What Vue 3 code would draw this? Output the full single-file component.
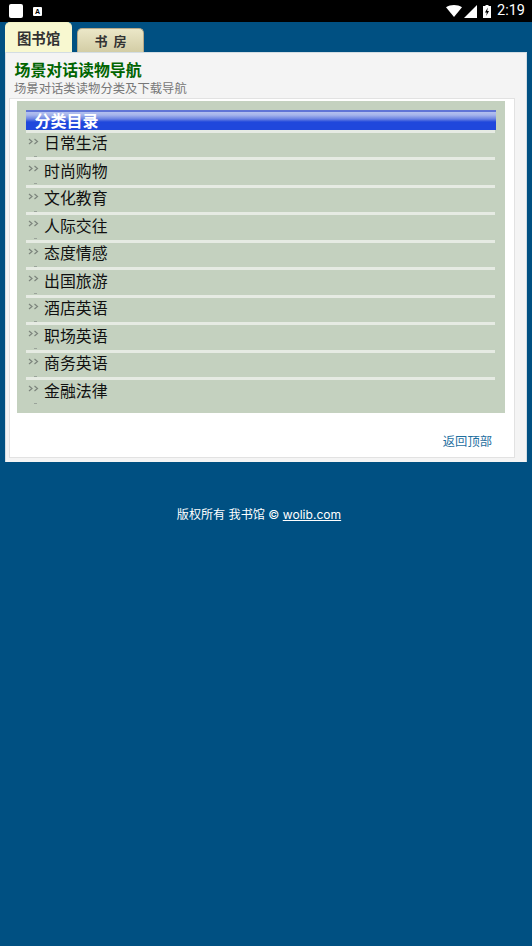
<script setup>
const items = ['日常生活', '时尚购物', '文化教育', '人际交往', '态度情感', '出国旅游', '酒店英语', '职场英语', '商务英语', '金融法律']
</script>

<template>
  <div class="page">
    <header class="status">
      <div class="status-left">
        <span class="app-square"></span>
        <span class="app-a"><span>A</span></span>
      </div>
      <div class="status-right">
        <svg class="wifi" width="16" height="12" viewBox="0 0 16 12"><path d="M0 2.2C4.5-.7 11.500-.7 16 2.200L8 12Z" fill="#fff"/></svg>
        <svg class="signal" width="13" height="13" viewBox="0 0 13 13"><path d="M13 0V13H0Z" fill="#fff"/></svg>
        <svg class="battery" width="8" height="13" viewBox="0 0 8 13"><path d="M2.500 0H5.500V1H8V13H0V1H2.500Z" fill="#fff"/><path d="M4.800 2.500 2 7.500H3.800L3.200 11 6 6H4.200Z" fill="#000"/></svg>
        <span class="time">2:19</span>
      </div>
    </header>

    <nav class="tabs">
      <div class="tab active">图书馆</div>
      <div class="tab idle">书&nbsp;&nbsp;房</div>
    </nav>

    <main class="panel">
      <h1 class="title">场景对话读物导航</h1>
      <p class="subtitle">场景对话类读物分类及下载导航</p>
      <section class="inner">
        <div class="green">
          <h2 class="cat-head">分类目录</h2>
          <div class="head-rule"></div>
          <ul class="list">
            <li v-for="(item, i) in items" :key="item" class="row" :class="{ last: i === items.length - 1 }">
              <svg class="arrows" width="11" height="7" viewBox="0 0 11 7"><path d="M1 1 4 3.500 1 6M6.500 1 9.500 3.500 6.500 6" fill="none" stroke="#7c847c" stroke-width="1.200"/></svg>
              <span class="label">{{ item }}</span>
              <i class="dot"></i>
            </li>
          </ul>
        </div>
        <div class="back"><a class="back-link">返回顶部</a></div>
      </section>
    </main>

    <footer class="foot">版权所有 我书馆 © <a class="foot-link">wolib.com</a></footer>
  </div>
</template>

<style>
html, body { margin: 0; background: #005082; }
</style>

<style scoped>
.page {
  width: 532px;
  height: 946px;
  overflow: hidden;
  background: #005082;
  font-family: "Noto Sans CJK SC", "Noto Sans", sans-serif;
}
.status {
  height: 22px;
  background: #000;
  display: flex;
  align-items: center;
  justify-content: space-between;
  padding: 0 7px 0 9px;
}
.status-left { display: flex; align-items: center; gap: 10px; }
.app-square { width: 14px; height: 14px; background: #fff; border-radius: 2px; }
.app-a {
  width: 9px; height: 9px; background: #fff; border-radius: 1px;
  display: flex; align-items: center; justify-content: center;
  color: #000; font: bold 7px/9px "Liberation Sans", sans-serif;
}
.status-right { display: flex; align-items: center; }
.wifi { margin-right: 2px; }
.signal { margin-right: 6px; }
.battery { margin-right: 6px; }
.time { color: #fff; font: 14.500px/22px Roboto, sans-serif; }

.tabs {
  height: 30px;
  display: flex;
  align-items: flex-end;
  padding-left: 5px;
  gap: 5px;
}
.tab { border-radius: 5px 5px 0 0; text-align: center; color: #333; font-weight: bold; }
.active {
  width: 67px; height: 30px; line-height: 30px;
  background: #f8f8d0; font-size: 14.400px;
  border-top: 1px solid #f3f3c5; box-sizing: border-box;
}
.idle {
  width: 67px; height: 24px; line-height: 24px; box-sizing: border-box;
  background: linear-gradient(#ebe7c8, #d3cda5);
  font-size: 13px;
  border: 1px solid #b7a888; border-bottom: 0;
}

.panel {
  width: 522px;
  height: 410px;
  margin-left: 5px;
  box-sizing: border-box;
  background: #f4f4f4;
  border: 1px solid #d3dde3;
  border-bottom: 0;
  padding-left: 3px;
}
.title {
  margin: 0; padding: 8px 0 0 5.500px;
  font-size: 15.900px; line-height: 18px; font-weight: bold; color: #006400;
}
.subtitle {
  margin: 1px 0 0; padding-left: 5px;
  font-size: 12.350px; line-height: 16px; color: #777;
}
.inner {
  width: 506px;
  height: 360px;
  margin-top: 2px;
  box-sizing: border-box;
  background: #fff;
  border: 1px solid #e2e2e2;
  padding: 2px 0 0 7px;
}
.green {
  width: 488px;
  height: 312px;
  box-sizing: border-box;
  background: #c4d1bf;
  padding: 9px 9px 0;
}
.cat-head {
  margin: 0; height: 20px; padding-left: 8.500px;
  background: linear-gradient(#5f74d6 0 2px, #b3c0ef 2px, #a5b4ec 5px, #6a82e2 9px, #1f47dc 12px, #1f47dc 100%);
  color: #fff; font-size: 16px; line-height: 21px; font-weight: bold;
}
.head-rule { width: 469px; height: 2.500px; background: #e6ebe3; }
.list { list-style: none; margin: 0; padding: 0; }
.row {
  height: 27.500px;
  box-sizing: border-box;
  width: 469px;
  border-bottom: 3px solid #e6ebe3;
  display: flex;
  align-items: flex-start;
  position: relative;
}
.row.last { border-bottom: 0; }
.arrows { margin: 5px 0 0 2px; flex: none; }
.label { margin: -1.500px 0 0 5px; font-size: 15.900px; line-height: 24px; color: #111; }
.dot {
  position: absolute; left: 8px; top: 23px;
  width: 3px; height: 1px; background: #9aa39a;
}
.back { padding: 14px 22px 0 0; text-align: right; }
.back-link { font-size: 12.300px; line-height: 18px; color: #1f6f9f; }
.foot {
  margin-top: 44px;
  padding-right: 14px;
  text-align: center;
  color: #fff;
  font-family: Inter, "Noto Sans CJK SC", sans-serif;
  font-size: 12.100px;
  line-height: 18px;
}
.foot-link { color: #fff; text-decoration: underline; }
</style>
